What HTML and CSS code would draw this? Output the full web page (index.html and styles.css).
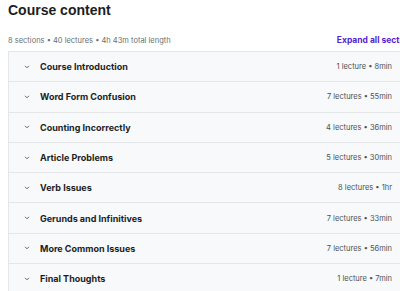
FILE: index.html
```html
<!DOCTYPE html>
<html>
<head>
  <title>Course content</title>
  <link rel="stylesheet" href="styles.css">
</head>
<body>
  <div class="course-content">
    <h2 class="title">Course content</h2>

    <div class="summary">
      <span class="stats">8 sections • 40 lectures • 4h 43m total length</span>
      <button class="expand">Expand all sections</button>
    </div>

    <div class="sections">
      <div class="section">
        <svg class="chevron" viewBox="0 0 10 10"><path d="M2.5 3.5 L5 6 L7.5 3.5" /></svg>
        <span class="section-title">Course Introduction</span>
        <span class="section-meta">1 lecture • 8min</span>
      </div>
      <div class="section">
        <svg class="chevron" viewBox="0 0 10 10"><path d="M2.5 3.5 L5 6 L7.5 3.5" /></svg>
        <span class="section-title">Word Form Confusion</span>
        <span class="section-meta">7 lectures • 55min</span>
      </div>
      <div class="section">
        <svg class="chevron" viewBox="0 0 10 10"><path d="M2.5 3.5 L5 6 L7.5 3.5" /></svg>
        <span class="section-title">Counting Incorrectly</span>
        <span class="section-meta">4 lectures • 36min</span>
      </div>
      <div class="section">
        <svg class="chevron" viewBox="0 0 10 10"><path d="M2.5 3.5 L5 6 L7.5 3.5" /></svg>
        <span class="section-title">Article Problems</span>
        <span class="section-meta">5 lectures • 30min</span>
      </div>
      <div class="section">
        <svg class="chevron" viewBox="0 0 10 10"><path d="M2.5 3.5 L5 6 L7.5 3.5" /></svg>
        <span class="section-title">Verb Issues</span>
        <span class="section-meta">8 lectures • 1hr</span>
      </div>
      <div class="section">
        <svg class="chevron" viewBox="0 0 10 10"><path d="M2.5 3.5 L5 6 L7.5 3.5" /></svg>
        <span class="section-title">Gerunds and Infinitives</span>
        <span class="section-meta">7 lectures • 33min</span>
      </div>
      <div class="section">
        <svg class="chevron" viewBox="0 0 10 10"><path d="M2.5 3.5 L5 6 L7.5 3.5" /></svg>
        <span class="section-title">More Common Issues</span>
        <span class="section-meta">7 lectures • 56min</span>
      </div>
      <div class="section">
        <svg class="chevron" viewBox="0 0 10 10"><path d="M2.5 3.5 L5 6 L7.5 3.5" /></svg>
        <span class="section-title">Final Thoughts</span>
        <span class="section-meta">1 lecture • 7min</span>
      </div>
    </div>
  </div>
</body>
</html>
```

FILE: styles.css
```css
html, body {
  margin: 0;
  overflow: hidden;
}

body {
  font-family: "Inter", "Noto Sans", sans-serif;
  color: #1c1d1f;
  background: #fff;
}

.course-content {
  width: 409px;
  padding-left: 8px;
}

.title {
  margin: 0;
  font-family: "Liberation Sans", Arial, sans-serif;
  font-size: 14px;
  font-weight: 700;
  line-height: 21px;
}

.summary {
  display: flex;
  justify-content: space-between;
  align-items: center;
  margin-top: 11px;
  height: 16px;
  margin-bottom: 3px;
  font-size: 7.5px;
  color: #6a6f73;
}

.expand {
  border: none;
  background: none;
  padding: 0;
  white-space: nowrap;
  font-family: inherit;
  font-size: 8.5px;
  font-weight: 700;
  color: #5624d0;
}

.sections {
  border: 1px solid #e4e6e8;
  border-bottom: none;
}

.section {
  display: flex;
  align-items: center;
  box-sizing: border-box;
  height: 30.3px;
  padding: 0 24px 0 14px;
  background: #f7f9fa;
  border-bottom: 1px solid #e4e6e8;
}

.chevron {
  width: 8px;
  height: 8px;
  fill: none;
  stroke: #4d5154;
  stroke-width: 1.1;
  margin-right: 9px;
}

.section-title {
  flex: 1;
  font-size: 9px;
  font-weight: 700;
}

.section-meta {
  font-size: 7.5px;
  color: #4d5154;
}
```
